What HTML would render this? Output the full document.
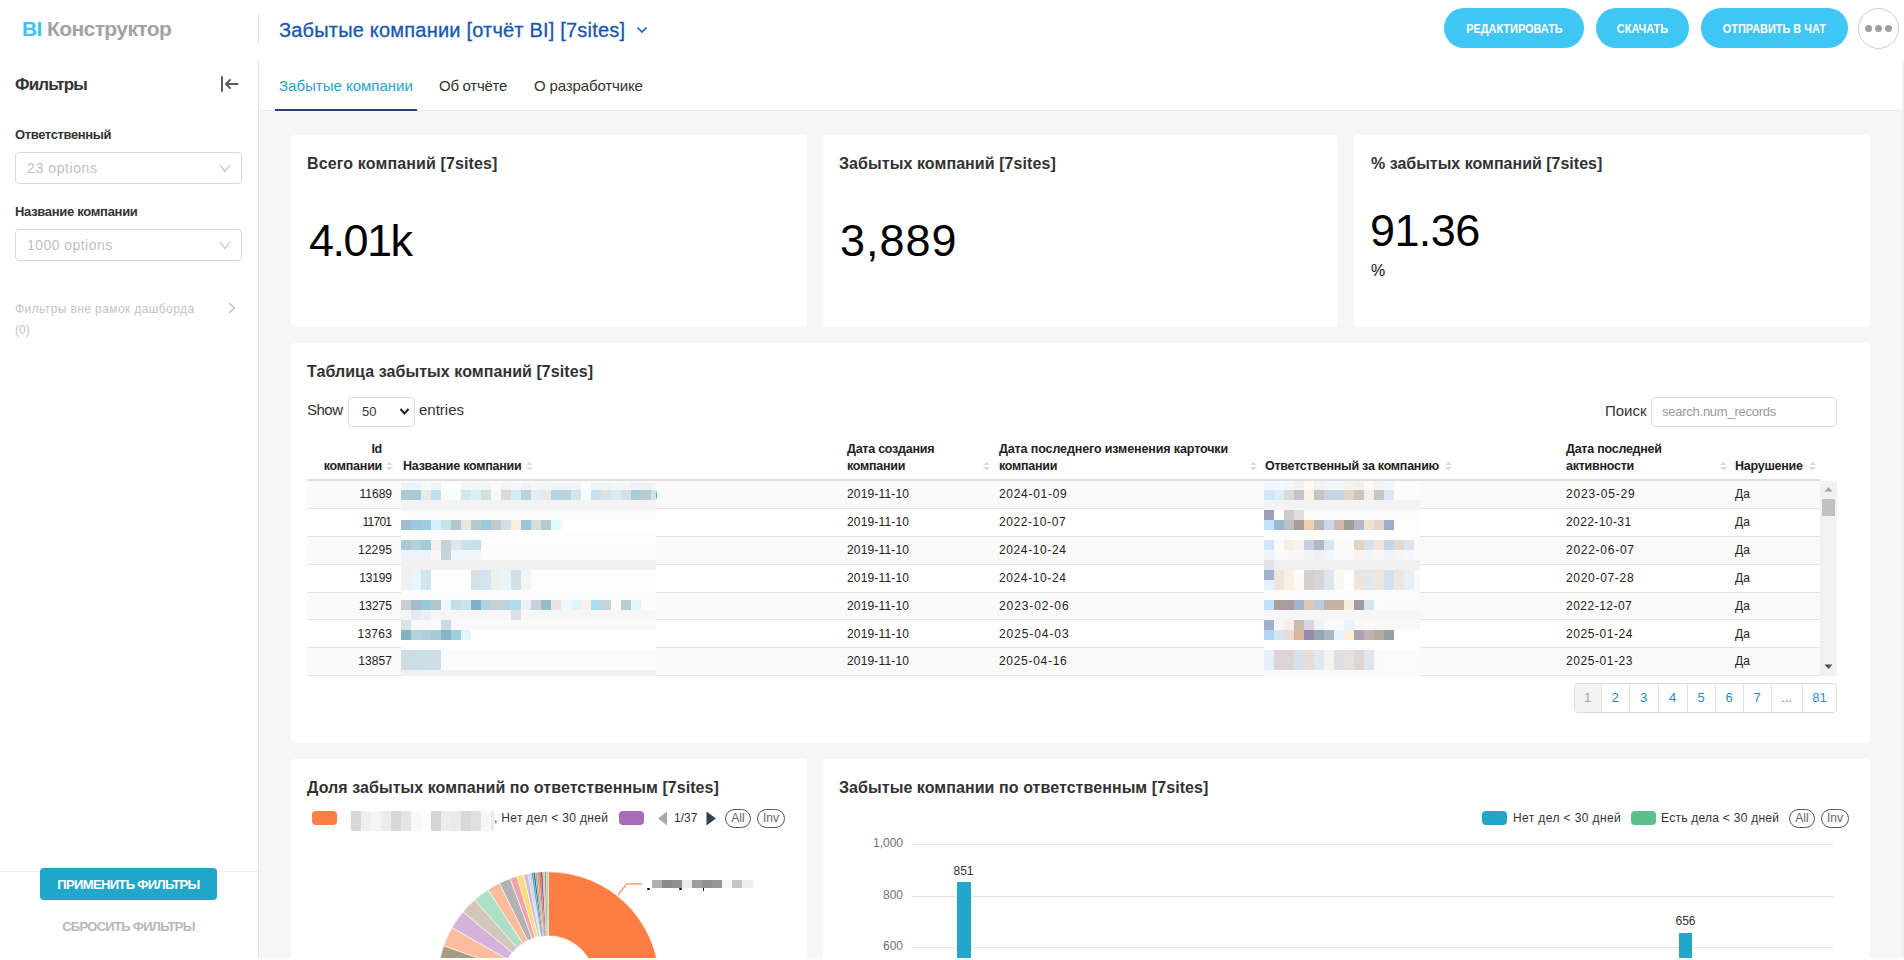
<!DOCTYPE html>
<html><head><meta charset="utf-8">
<style>
*{margin:0;padding:0;box-sizing:border-box}
html,body{width:1904px;height:960px;overflow:hidden;background:#fff;font-family:"Liberation Sans",sans-serif;color:#333}
.a{position:absolute;white-space:nowrap;line-height:1}
.box{position:absolute}
#content{position:absolute;left:259px;top:111px;width:1643px;height:847px;background:#f6f6f6}
.card{position:absolute;background:#fff;border-radius:4px}
.pill{position:absolute;top:8px;height:40px;border-radius:20px;background:#40c6f2;color:#fff;font-weight:bold;font-size:13px;line-height:40px;text-align:center}
.pill span{display:inline-block;transform:scaleX(0.84);position:relative;top:1px}
.kt{font-size:16px;font-weight:bold;color:#323232}
.kv{font-size:45px;color:#000}
.th{font-size:12.5px;font-weight:bold;color:#222;letter-spacing:-0.25px}
.td{font-size:12px;color:#222}
.pg{font-size:13px}
.lg{font-size:12px;color:#333}
.ax{font-size:12px;color:#6e7079}
</style></head><body>

<!-- HEADER -->
<div class="a" style="left:22px;top:18px;font-size:21px;font-weight:bold;letter-spacing:-0.6px"><span style="color:#3ec3f2">BI</span> <span style="color:#9ea3aa">Конструктор</span></div>
<div class="box" style="left:258px;top:14px;width:1px;height:30px;background:#e0e0e0"></div>
<div class="a" style="left:279px;top:20px;font-size:20px;color:#1757ae;letter-spacing:0.2px;-webkit-text-stroke:0.3px #1757ae">Забытые компании [отчёт BI] [7sites]</div>
<svg class="box" style="left:636px;top:25px" width="12" height="10" viewBox="0 0 12 10"><path d="M1.5 2.5 L6 7 L10.5 2.5" fill="none" stroke="#1e60b5" stroke-width="1.6"/></svg>

<div class="pill" style="left:1444px;width:140px"><span>РЕДАКТИРОВАТЬ</span></div>
<div class="pill" style="left:1596px;width:93px"><span>СКАЧАТЬ</span></div>
<div class="pill" style="left:1701px;width:147px"><span>ОТПРАВИТЬ В ЧАТ</span></div>
<div class="box" style="left:1858px;top:8px;width:41px;height:41px;border-radius:50%;border:1px solid #ccc"></div>
<div class="box" style="left:1865px;top:25px;width:7px;height:7px;border-radius:50%;background:#9a9fa6"></div>
<div class="box" style="left:1875px;top:25px;width:7px;height:7px;border-radius:50%;background:#9a9fa6"></div>
<div class="box" style="left:1885px;top:25px;width:7px;height:7px;border-radius:50%;background:#9a9fa6"></div>

<!-- SIDEBAR -->
<div class="box" style="left:258px;top:61px;width:1px;height:897px;background:#e3e3e3"></div>
<div class="a" style="left:15px;top:76px;font-size:17px;font-weight:bold;letter-spacing:-0.85px">Фильтры</div>
<svg class="box" style="left:218px;top:74px" width="22" height="20" viewBox="0 0 22 20"><path d="M4 3 V17 M8 10 H19.5 M12 6 L8 10 L12 14" fill="none" stroke="#5a5a5a" stroke-width="2" stroke-linecap="round" stroke-linejoin="round"/></svg>

<div class="a" style="left:15px;top:128px;font-size:13px;font-weight:bold;letter-spacing:-0.38px">Ответственный</div>
<div class="box" style="left:15px;top:152px;width:227px;height:32px;border:1px solid #d9d9d9;border-radius:4px"></div>
<div class="a" style="left:27px;top:161px;font-size:14px;color:#bfbfbf;letter-spacing:0.6px">23 options</div>
<svg class="box" style="left:219px;top:163px" width="12" height="10" viewBox="0 0 12 10"><path d="M1.2 2 L6 8.6 L10.8 2" fill="none" stroke="#bdbdbd" stroke-width="1.1"/></svg>

<div class="a" style="left:15px;top:205px;font-size:13px;font-weight:bold;letter-spacing:-0.3px">Название компании</div>
<div class="box" style="left:15px;top:229px;width:227px;height:32px;border:1px solid #d9d9d9;border-radius:4px"></div>
<div class="a" style="left:27px;top:238px;font-size:14px;color:#bfbfbf;letter-spacing:0.45px">1000 options</div>
<svg class="box" style="left:219px;top:240px" width="12" height="10" viewBox="0 0 12 10"><path d="M1.2 2 L6 8.6 L10.8 2" fill="none" stroke="#bdbdbd" stroke-width="1.1"/></svg>

<div class="a" style="left:15px;top:303px;font-size:12px;color:#c4c4c4;letter-spacing:0.4px">Фильтры вне рамок дашборда</div>
<div class="a" style="left:15px;top:324px;font-size:12px;color:#c4c4c4">(0)</div>
<svg class="box" style="left:227px;top:302px" width="10" height="12" viewBox="0 0 10 12"><path d="M2 1 L7.5 6 L2 11" fill="none" stroke="#bbb" stroke-width="1.2"/></svg>

<div class="box" style="left:0;top:871px;width:258px;height:1px;background:#ececec"></div>
<div class="box" style="left:40px;top:868px;width:177px;height:32px;border-radius:4px;background:#20a7cb"></div>
<div class="a" style="left:40px;top:878px;width:177px;text-align:center;font-size:13px;font-weight:bold;color:#fff;letter-spacing:-0.65px">ПРИМЕНИТЬ ФИЛЬТРЫ</div>
<div class="a" style="left:40px;top:920px;width:177px;text-align:center;font-size:13px;font-weight:bold;color:#b8b8b8;letter-spacing:-0.7px">СБРОСИТЬ ФИЛЬТРЫ</div>

<!-- TABS -->
<div class="box" style="left:1902px;top:61px;width:2px;height:899px;background:#efefef"></div>
<div class="box" style="left:259px;top:110px;width:1643px;height:1px;background:#e8e8e8"></div>
<div class="a" style="left:279px;top:78px;font-size:15px;color:#2aa3cc">Забытые компании</div>
<div class="a" style="left:439px;top:78px;font-size:15px;color:#333;letter-spacing:-0.28px">Об отчёте</div>
<div class="a" style="left:534px;top:78px;font-size:15px;color:#333;letter-spacing:-0.14px">О разработчике</div>
<div class="box" style="left:275px;top:109px;width:142px;height:2px;background:#2f3f7a"></div>

<div id="content">
</div>


<!-- KPI -->
<div class="card" style="left:291px;top:135px;width:516px;height:192px"></div>
<div class="card" style="left:823px;top:135px;width:515px;height:192px"></div>
<div class="card" style="left:1354px;top:135px;width:516px;height:192px"></div>
<div class="a kt" style="left:307px;top:156px;letter-spacing:0.13px">Всего компаний [7sites]</div>
<div class="a kt" style="left:839px;top:156px;letter-spacing:0.08px">Забытых компаний [7sites]</div>
<div class="a kt" style="left:1371px;top:156px">% забытых компаний [7sites]</div>
<div class="a kv" style="left:309px;top:218px;letter-spacing:-1.5px">4.01k</div>
<div class="a kv" style="left:840px;top:218px;letter-spacing:1px">3,889</div>
<div class="a kv" style="left:1370px;top:208px;letter-spacing:-0.6px">91.36</div>
<div class="a" style="left:1371px;top:263px;font-size:16px;color:#111">%</div>

<!-- TABLE CARD -->
<div class="card" style="left:291px;top:343px;width:1579px;height:400px"></div>
<div class="a kt" style="left:307px;top:364px;letter-spacing:0.07px">Таблица забытых компаний [7sites]</div>
<div class="a" style="left:307px;top:402px;font-size:15px;color:#333;letter-spacing:-0.5px">Show</div>
<div class="box" style="left:348px;top:397px;width:67px;height:30px;border:1px solid #ddd;border-radius:4px"></div>
<div class="a" style="left:362px;top:405px;font-size:13px;color:#333">50</div>
<svg class="box" style="left:399px;top:407px" width="11" height="9" viewBox="0 0 11 9"><path d="M1.5 2 L5.5 6.5 L9.5 2" fill="none" stroke="#222" stroke-width="2"/></svg>
<div class="a" style="left:419px;top:402px;font-size:15px;color:#333">entries</div>
<div class="a" style="left:1605px;top:403px;font-size:15px;color:#333">Поиск</div>
<div class="box" style="left:1651px;top:397px;width:186px;height:30px;border:1px solid #ddd;border-radius:4px"></div>
<div class="a" style="left:1662px;top:405px;font-size:13px;color:#999;letter-spacing:-0.25px">search.num_records</div>

<!-- TABLE BODY -->
<div class="a th" style="left:300px;width:82px;text-align:right;top:443px">Id</div>
<div class="a th" style="left:300px;width:82px;text-align:right;top:460px">компании</div>
<svg class="box" style="left:386px;top:461px" width="7" height="10" viewBox="0 0 7 10"><path d="M0 4 L3.5 0.5 L7 4Z M0 6 L3.5 9.5 L7 6Z" fill="#dcdcdc"/></svg>
<div class="a th" style="left:403px;top:460px">Название компании</div>
<svg class="box" style="left:526px;top:461px" width="7" height="10" viewBox="0 0 7 10"><path d="M0 4 L3.5 0.5 L7 4Z M0 6 L3.5 9.5 L7 6Z" fill="#dcdcdc"/></svg>
<div class="a th" style="left:847px;top:443px">Дата создания</div>
<div class="a th" style="left:847px;top:460px">компании</div>
<svg class="box" style="left:983px;top:461px" width="7" height="10" viewBox="0 0 7 10"><path d="M0 4 L3.5 0.5 L7 4Z M0 6 L3.5 9.5 L7 6Z" fill="#dcdcdc"/></svg>
<div class="a th" style="left:999px;top:443px;letter-spacing:-0.12px">Дата последнего изменения карточки</div>
<div class="a th" style="left:999px;top:460px">компании</div>
<svg class="box" style="left:1250px;top:461px" width="7" height="10" viewBox="0 0 7 10"><path d="M0 4 L3.5 0.5 L7 4Z M0 6 L3.5 9.5 L7 6Z" fill="#dcdcdc"/></svg>
<div class="a th" style="left:1265px;top:460px">Ответственный за компанию</div>
<svg class="box" style="left:1445px;top:461px" width="7" height="10" viewBox="0 0 7 10"><path d="M0 4 L3.5 0.5 L7 4Z M0 6 L3.5 9.5 L7 6Z" fill="#dcdcdc"/></svg>
<div class="a th" style="left:1566px;top:443px">Дата последней</div>
<div class="a th" style="left:1566px;top:460px">активности</div>
<svg class="box" style="left:1720px;top:461px" width="7" height="10" viewBox="0 0 7 10"><path d="M0 4 L3.5 0.5 L7 4Z M0 6 L3.5 9.5 L7 6Z" fill="#dcdcdc"/></svg>
<div class="a th" style="left:1735px;top:460px">Нарушение</div>
<svg class="box" style="left:1809px;top:461px" width="7" height="10" viewBox="0 0 7 10"><path d="M0 4 L3.5 0.5 L7 4Z M0 6 L3.5 9.5 L7 6Z" fill="#dcdcdc"/></svg>
<div class="box" style="left:307px;top:479px;width:1513px;height:2px;background:#dedede"></div>
<div class="box" style="left:307px;top:481px;width:1513px;height:28px;background:#fafafa;border-bottom:1px solid #e2e2e2"></div>
<div class="a td" style="left:359.5px;top:488px;letter-spacing:0.0px">11689</div>
<div class="a td" style="left:847px;top:488px;letter-spacing:0.16px">2019-11-10</div>
<div class="a td" style="left:999px;top:488px;letter-spacing:0.7px">2024-01-09</div>
<div class="a td" style="left:1566px;top:488px;letter-spacing:0.81px">2023-05-29</div>
<div class="a td" style="left:1735px;top:488px">Да</div>
<div class="box" style="left:307px;top:509px;width:1513px;height:28px;background:#fff;border-bottom:1px solid #e2e2e2"></div>
<div class="a td" style="left:362.5px;top:516px;letter-spacing:-0.75px">11701</div>
<div class="a td" style="left:847px;top:516px;letter-spacing:0.16px">2019-11-10</div>
<div class="a td" style="left:999px;top:516px;letter-spacing:0.58px">2022-10-07</div>
<div class="a td" style="left:1566px;top:516px;letter-spacing:0.41px">2022-10-31</div>
<div class="a td" style="left:1735px;top:516px">Да</div>
<div class="box" style="left:307px;top:537px;width:1513px;height:28px;background:#fafafa;border-bottom:1px solid #e2e2e2"></div>
<div class="a td" style="left:358.0px;top:544px;letter-spacing:0.12px">12295</div>
<div class="a td" style="left:847px;top:544px;letter-spacing:0.16px">2019-11-10</div>
<div class="a td" style="left:999px;top:544px;letter-spacing:0.61px">2024-10-24</div>
<div class="a td" style="left:1566px;top:544px;letter-spacing:0.73px">2022-06-07</div>
<div class="a td" style="left:1735px;top:544px">Да</div>
<div class="box" style="left:307px;top:565px;width:1513px;height:28px;background:#fff;border-bottom:1px solid #e2e2e2"></div>
<div class="a td" style="left:359.3px;top:572px;letter-spacing:-0.2px">13199</div>
<div class="a td" style="left:847px;top:572px;letter-spacing:0.16px">2019-11-10</div>
<div class="a td" style="left:999px;top:572px;letter-spacing:0.61px">2024-10-24</div>
<div class="a td" style="left:1566px;top:572px;letter-spacing:0.69px">2020-07-28</div>
<div class="a td" style="left:1735px;top:572px">Да</div>
<div class="box" style="left:307px;top:593px;width:1513px;height:27px;background:#fafafa;border-bottom:1px solid #e2e2e2"></div>
<div class="a td" style="left:358.7px;top:600px;letter-spacing:-0.05px">13275</div>
<div class="a td" style="left:847px;top:600px;letter-spacing:0.16px">2019-11-10</div>
<div class="a td" style="left:999px;top:600px;letter-spacing:0.91px">2023-02-06</div>
<div class="a td" style="left:1566px;top:600px;letter-spacing:0.49px">2022-12-07</div>
<div class="a td" style="left:1735px;top:600px">Да</div>
<div class="box" style="left:307px;top:620px;width:1513px;height:28px;background:#fff;border-bottom:1px solid #e2e2e2"></div>
<div class="a td" style="left:357.5px;top:628px;letter-spacing:0.25px">13763</div>
<div class="a td" style="left:847px;top:628px;letter-spacing:0.16px">2019-11-10</div>
<div class="a td" style="left:999px;top:628px;letter-spacing:0.91px">2025-04-03</div>
<div class="a td" style="left:1566px;top:628px;letter-spacing:0.57px">2025-01-24</div>
<div class="a td" style="left:1735px;top:628px">Да</div>
<div class="box" style="left:307px;top:648px;width:1513px;height:28px;background:#fafafa;border-bottom:1px solid #e2e2e2"></div>
<div class="a td" style="left:358.2px;top:655px;letter-spacing:0.08px">13857</div>
<div class="a td" style="left:847px;top:655px;letter-spacing:0.16px">2019-11-10</div>
<div class="a td" style="left:999px;top:655px;letter-spacing:0.7px">2025-04-16</div>
<div class="a td" style="left:1566px;top:655px;letter-spacing:0.57px">2025-01-23</div>
<div class="a td" style="left:1735px;top:655px">Да</div>
<div class="a td" style="left:653.5px;top:488px;color:#2a86c8">)</div>
<svg class="box" style="left:401px;top:483px" width="255" height="193" shape-rendering="crispEdges"><rect x="0" y="0" width="20" height="7" fill="#ecf2f5"/><rect x="20" y="0" width="10" height="7" fill="#f8f8f6"/><rect x="30" y="0" width="10" height="7" fill="#eef5f8"/><rect x="40" y="0" width="20" height="7" fill="#fcfcfc"/><rect x="60" y="0" width="10" height="7" fill="#f1f6f9"/><rect x="70" y="0" width="10" height="7" fill="#f2f7f8"/><rect x="80" y="0" width="10" height="7" fill="#f4f5f3"/><rect x="90" y="0" width="10" height="7" fill="#fafaf8"/><rect x="100" y="0" width="10" height="7" fill="#f3f4f3"/><rect x="110" y="0" width="10" height="7" fill="#f4f8fa"/><rect x="120" y="0" width="10" height="7" fill="#eef2f5"/><rect x="130" y="0" width="10" height="7" fill="#f5f8fa"/><rect x="140" y="0" width="10" height="7" fill="#f3f6f6"/><rect x="150" y="0" width="20" height="7" fill="#eef3f5"/><rect x="170" y="0" width="10" height="7" fill="#f0f5f7"/><rect x="180" y="0" width="10" height="7" fill="#fbfcfc"/><rect x="190" y="0" width="10" height="7" fill="#eef4f8"/><rect x="200" y="0" width="10" height="7" fill="#f2f4f3"/><rect x="210" y="0" width="10" height="7" fill="#f3f7fa"/><rect x="220" y="0" width="10" height="7" fill="#f4f6f7"/><rect x="230" y="0" width="20" height="7" fill="#ecf1f3"/><rect x="250" y="0" width="5" height="7" fill="#f2f5f6"/><rect x="0" y="7" width="10" height="10" fill="#afc9d1"/><rect x="10" y="7" width="10" height="10" fill="#a7cad8"/><rect x="20" y="7" width="10" height="10" fill="#e8eae6"/><rect x="30" y="7" width="10" height="10" fill="#bfe0ef"/><rect x="40" y="7" width="10" height="10" fill="#fbfcf9"/><rect x="50" y="7" width="10" height="10" fill="#f8fdfe"/><rect x="60" y="7" width="10" height="10" fill="#d3e6ef"/><rect x="70" y="7" width="10" height="10" fill="#d9eef5"/><rect x="80" y="7" width="10" height="10" fill="#d5dfde"/><rect x="90" y="7" width="10" height="10" fill="#f7f8f0"/><rect x="100" y="7" width="10" height="10" fill="#d5dcdd"/><rect x="110" y="7" width="10" height="10" fill="#d5ecf8"/><rect x="120" y="7" width="10" height="10" fill="#b9d3dd"/><rect x="130" y="7" width="10" height="10" fill="#e2eef5"/><rect x="140" y="7" width="10" height="10" fill="#e8e9e8"/><rect x="150" y="7" width="20" height="10" fill="#b7d4de"/><rect x="170" y="7" width="10" height="10" fill="#d0e6ea"/><rect x="180" y="7" width="10" height="10" fill="#fafcfc"/><rect x="190" y="7" width="10" height="10" fill="#c5e1ee"/><rect x="200" y="7" width="10" height="10" fill="#dbe2e4"/><rect x="210" y="7" width="10" height="10" fill="#d4edf4"/><rect x="220" y="7" width="10" height="10" fill="#d6e2e1"/><rect x="230" y="7" width="10" height="10" fill="#a8cdd6"/><rect x="240" y="7" width="10" height="10" fill="#b6cdd6"/><rect x="250" y="7" width="5" height="10" fill="#d7e3e3"/><rect x="0" y="17" width="255" height="10" fill="#f3f3f3"/><rect x="0" y="27" width="255" height="10" fill="#fcfcfc"/><rect x="0" y="37" width="10" height="10" fill="#9dbdd0"/><rect x="10" y="37" width="10" height="10" fill="#a0c6dd"/><rect x="20" y="37" width="10" height="10" fill="#9ccde2"/><rect x="30" y="37" width="10" height="10" fill="#d1f1fc"/><rect x="40" y="37" width="10" height="10" fill="#c5e5e3"/><rect x="50" y="37" width="10" height="10" fill="#b3c7d0"/><rect x="60" y="37" width="10" height="10" fill="#e6e9e2"/><rect x="70" y="37" width="10" height="10" fill="#b7c9cc"/><rect x="80" y="37" width="10" height="10" fill="#9cc7da"/><rect x="90" y="37" width="10" height="10" fill="#c1cacd"/><rect x="100" y="37" width="10" height="10" fill="#d4dfe2"/><rect x="110" y="37" width="10" height="10" fill="#fbede1"/><rect x="120" y="37" width="10" height="10" fill="#9dc3d9"/><rect x="130" y="37" width="10" height="10" fill="#d5dedb"/><rect x="140" y="37" width="10" height="10" fill="#b8c9c9"/><rect x="150" y="37" width="10" height="10" fill="#defcfe"/><rect x="160" y="37" width="95" height="10" fill="#ffffff"/><rect x="0" y="47" width="255" height="10" fill="#fdfdfd"/><rect x="0" y="57" width="10" height="10" fill="#a9cbd7"/><rect x="10" y="57" width="10" height="10" fill="#b4d0d8"/><rect x="20" y="57" width="10" height="10" fill="#a2cbd8"/><rect x="30" y="57" width="10" height="10" fill="#f6efe9"/><rect x="40" y="57" width="10" height="10" fill="#c3d3da"/><rect x="50" y="57" width="10" height="10" fill="#dce7ec"/><rect x="60" y="57" width="10" height="10" fill="#c9e2ea"/><rect x="70" y="57" width="10" height="10" fill="#c3e1e4"/><rect x="80" y="57" width="175" height="10" fill="#fcfcfc"/><rect x="0" y="67" width="30" height="10" fill="#ecf3f6"/><rect x="30" y="67" width="10" height="10" fill="#fbf9f7"/><rect x="40" y="67" width="10" height="10" fill="#c3d3da"/><rect x="50" y="67" width="30" height="10" fill="#f1f6f7"/><rect x="80" y="67" width="175" height="10" fill="#fcfcfc"/><rect x="0" y="77" width="255" height="10" fill="#f0f0f0"/><rect x="0" y="87" width="10" height="20" fill="#f0f0f0"/><rect x="10" y="87" width="10" height="20" fill="#e6f6fb"/><rect x="20" y="87" width="10" height="20" fill="#d0e6ee"/><rect x="30" y="87" width="40" height="20" fill="#fdfdfd"/><rect x="70" y="87" width="10" height="20" fill="#d3e2e7"/><rect x="80" y="87" width="10" height="20" fill="#d2e4ef"/><rect x="90" y="87" width="10" height="20" fill="#ecf0ee"/><rect x="100" y="87" width="10" height="20" fill="#e7f4f9"/><rect x="110" y="87" width="10" height="20" fill="#d1e1e7"/><rect x="120" y="87" width="10" height="20" fill="#f6f4f0"/><rect x="130" y="87" width="125" height="20" fill="#fdfdfd"/><rect x="0" y="107" width="255" height="10" fill="#fcfcfc"/><rect x="0" y="117" width="10" height="10" fill="#c8cfd0"/><rect x="10" y="117" width="10" height="10" fill="#a5bdc8"/><rect x="20" y="117" width="10" height="10" fill="#99cadb"/><rect x="30" y="117" width="10" height="10" fill="#b2c6cb"/><rect x="40" y="117" width="10" height="10" fill="#eef7f9"/><rect x="50" y="117" width="10" height="10" fill="#c5dde6"/><rect x="60" y="117" width="10" height="10" fill="#c9e3ee"/><rect x="70" y="117" width="10" height="10" fill="#80b4c4"/><rect x="80" y="117" width="10" height="10" fill="#acd4e2"/><rect x="90" y="117" width="10" height="10" fill="#c8d0d3"/><rect x="100" y="117" width="10" height="10" fill="#bad5df"/><rect x="110" y="117" width="10" height="10" fill="#b1dded"/><rect x="120" y="117" width="10" height="10" fill="#e8f1f4"/><rect x="130" y="117" width="10" height="10" fill="#c8d0da"/><rect x="140" y="117" width="10" height="10" fill="#94bcc8"/><rect x="150" y="117" width="10" height="10" fill="#ebe5e3"/><rect x="160" y="117" width="10" height="10" fill="#eff8fb"/><rect x="170" y="117" width="10" height="10" fill="#dff4fa"/><rect x="180" y="117" width="10" height="10" fill="#f8f3ea"/><rect x="190" y="117" width="10" height="10" fill="#a8dcee"/><rect x="200" y="117" width="10" height="10" fill="#c7d2d6"/><rect x="210" y="117" width="10" height="10" fill="#fcfbf7"/><rect x="220" y="117" width="10" height="10" fill="#b8cdd3"/><rect x="230" y="117" width="10" height="10" fill="#dff7fb"/><rect x="240" y="117" width="15" height="10" fill="#fcfcfc"/><rect x="0" y="127" width="10" height="10" fill="#f6f6f6"/><rect x="10" y="127" width="10" height="10" fill="#e2e9f1"/><rect x="20" y="127" width="10" height="10" fill="#ebeff3"/><rect x="30" y="127" width="80" height="10" fill="#f6f6f6"/><rect x="110" y="127" width="10" height="10" fill="#d9e2e9"/><rect x="120" y="127" width="135" height="10" fill="#f6f6f6"/><rect x="0" y="137" width="10" height="10" fill="#dae5e8"/><rect x="10" y="137" width="30" height="10" fill="#f9f9f9"/><rect x="40" y="137" width="10" height="10" fill="#c5dce2"/><rect x="50" y="137" width="205" height="10" fill="#f9f9f9"/><rect x="0" y="147" width="10" height="10" fill="#85b2c3"/><rect x="10" y="147" width="10" height="10" fill="#b5d3d6"/><rect x="20" y="147" width="10" height="10" fill="#acd0dd"/><rect x="30" y="147" width="10" height="10" fill="#a4cdd2"/><rect x="40" y="147" width="10" height="10" fill="#87b6c6"/><rect x="50" y="147" width="10" height="10" fill="#99cfe1"/><rect x="60" y="147" width="10" height="10" fill="#e4f3f9"/><rect x="70" y="147" width="185" height="10" fill="#ffffff"/><rect x="0" y="157" width="255" height="10" fill="#fefefe"/><rect x="0" y="167" width="10" height="20" fill="#cddde4"/><rect x="10" y="167" width="10" height="20" fill="#c5e0e7"/><rect x="20" y="167" width="10" height="20" fill="#cbdfe6"/><rect x="30" y="167" width="10" height="20" fill="#cfdee6"/><rect x="40" y="167" width="215" height="20" fill="#fbfbfb"/><rect x="0" y="187" width="255" height="6" fill="#f0f0f0"/></svg>
<svg class="box" style="left:1264px;top:481px" width="156" height="195" shape-rendering="crispEdges"><rect x="0" y="0" width="10" height="9" fill="#f3f7fc"/><rect x="10" y="0" width="10" height="9" fill="#f2f9fd"/><rect x="20" y="0" width="10" height="9" fill="#f5f5f5"/><rect x="30" y="0" width="10" height="9" fill="#f1f1f3"/><rect x="40" y="0" width="10" height="9" fill="#fcfbf6"/><rect x="50" y="0" width="10" height="9" fill="#f2f2f2"/><rect x="60" y="0" width="10" height="9" fill="#f3f4f6"/><rect x="70" y="0" width="10" height="9" fill="#f1f4f9"/><rect x="80" y="0" width="10" height="9" fill="#f5f3f0"/><rect x="90" y="0" width="10" height="9" fill="#f2f1ef"/><rect x="100" y="0" width="10" height="9" fill="#fbfaf7"/><rect x="110" y="0" width="10" height="9" fill="#f3f3f3"/><rect x="120" y="0" width="10" height="9" fill="#f3f7fb"/><rect x="130" y="0" width="26" height="9" fill="#fcfcfc"/><rect x="0" y="9" width="10" height="10" fill="#cfe6fb"/><rect x="10" y="9" width="10" height="10" fill="#d9eef8"/><rect x="20" y="9" width="10" height="10" fill="#d8dbd8"/><rect x="30" y="9" width="10" height="10" fill="#c5c2c8"/><rect x="40" y="9" width="10" height="10" fill="#fcf1e1"/><rect x="50" y="9" width="10" height="10" fill="#c4c4c3"/><rect x="60" y="9" width="10" height="10" fill="#cbd3dc"/><rect x="70" y="9" width="10" height="10" fill="#c6d4ea"/><rect x="80" y="9" width="10" height="10" fill="#e1d5ca"/><rect x="90" y="9" width="10" height="10" fill="#ccc4bd"/><rect x="100" y="9" width="10" height="10" fill="#f3ede5"/><rect x="110" y="9" width="10" height="10" fill="#c6c6c9"/><rect x="120" y="9" width="10" height="10" fill="#dbe9f6"/><rect x="130" y="9" width="26" height="10" fill="#fcfcfc"/><rect x="0" y="19" width="156" height="10" fill="#f3f3f3"/><rect x="0" y="29" width="10" height="10" fill="#9aa0b7"/><rect x="10" y="29" width="10" height="10" fill="#fdfdfd"/><rect x="20" y="29" width="10" height="10" fill="#cccccc"/><rect x="30" y="29" width="10" height="10" fill="#dedede"/><rect x="40" y="29" width="116" height="10" fill="#fcfcfc"/><rect x="0" y="39" width="10" height="10" fill="#c3e2fd"/><rect x="10" y="39" width="10" height="10" fill="#96b8d0"/><rect x="20" y="39" width="10" height="10" fill="#bdbfc1"/><rect x="30" y="39" width="10" height="10" fill="#aa9b9a"/><rect x="40" y="39" width="10" height="10" fill="#ecd0ac"/><rect x="50" y="39" width="10" height="10" fill="#b5b7b2"/><rect x="60" y="39" width="10" height="10" fill="#c6d9ec"/><rect x="70" y="39" width="10" height="10" fill="#cdb9b0"/><rect x="80" y="39" width="10" height="10" fill="#9e9e97"/><rect x="90" y="39" width="10" height="10" fill="#b4b6cf"/><rect x="100" y="39" width="10" height="10" fill="#ede3d4"/><rect x="110" y="39" width="10" height="10" fill="#e3d5c8"/><rect x="120" y="39" width="10" height="10" fill="#9eadca"/><rect x="130" y="39" width="26" height="10" fill="#fdfdfd"/><rect x="0" y="49" width="156" height="10" fill="#fdfdfd"/><rect x="0" y="59" width="10" height="10" fill="#d0e7fb"/><rect x="10" y="59" width="10" height="10" fill="#fbfbfb"/><rect x="20" y="59" width="10" height="10" fill="#f6ede3"/><rect x="30" y="59" width="10" height="10" fill="#f7f2ed"/><rect x="40" y="59" width="10" height="10" fill="#c3d1e3"/><rect x="50" y="59" width="10" height="10" fill="#b2b7c4"/><rect x="60" y="59" width="10" height="10" fill="#d7e6f3"/><rect x="70" y="59" width="10" height="10" fill="#f7faf5"/><rect x="80" y="59" width="10" height="10" fill="#fafafa"/><rect x="90" y="59" width="10" height="10" fill="#e2d4c4"/><rect x="100" y="59" width="10" height="10" fill="#d6e1ed"/><rect x="110" y="59" width="10" height="10" fill="#f1e5da"/><rect x="120" y="59" width="10" height="10" fill="#c3d7e9"/><rect x="130" y="59" width="10" height="10" fill="#e3d8cc"/><rect x="140" y="59" width="10" height="10" fill="#dce5ef"/><rect x="150" y="59" width="6" height="10" fill="#f7fafb"/><rect x="0" y="69" width="10" height="10" fill="#f1f5fb"/><rect x="10" y="69" width="10" height="10" fill="#fafafa"/><rect x="20" y="69" width="20" height="10" fill="#faf9f7"/><rect x="40" y="69" width="10" height="10" fill="#f0f4f7"/><rect x="50" y="69" width="10" height="10" fill="#eff0f2"/><rect x="60" y="69" width="10" height="10" fill="#f2f6fa"/><rect x="70" y="69" width="20" height="10" fill="#fafafa"/><rect x="90" y="69" width="10" height="10" fill="#f7f4ef"/><rect x="100" y="69" width="10" height="10" fill="#f3f6f9"/><rect x="110" y="69" width="10" height="10" fill="#f9f7f3"/><rect x="120" y="69" width="10" height="10" fill="#f0f4f8"/><rect x="130" y="69" width="10" height="10" fill="#f5f5f1"/><rect x="140" y="69" width="10" height="10" fill="#f5f7f9"/><rect x="150" y="69" width="6" height="10" fill="#fafafa"/><rect x="0" y="79" width="10" height="10" fill="#e3e3e5"/><rect x="10" y="79" width="146" height="10" fill="#f0f0f0"/><rect x="0" y="89" width="10" height="10" fill="#a0b1cb"/><rect x="10" y="89" width="10" height="10" fill="#eee5de"/><rect x="20" y="89" width="10" height="10" fill="#fcf0e3"/><rect x="30" y="89" width="10" height="10" fill="#fdfaf6"/><rect x="40" y="89" width="10" height="10" fill="#d7d0d1"/><rect x="50" y="89" width="10" height="10" fill="#d5d6d8"/><rect x="60" y="89" width="10" height="10" fill="#dde5ee"/><rect x="70" y="89" width="10" height="10" fill="#f8f9f2"/><rect x="80" y="89" width="10" height="10" fill="#fefefe"/><rect x="90" y="89" width="10" height="10" fill="#efe5db"/><rect x="100" y="89" width="10" height="10" fill="#e2e6ee"/><rect x="110" y="89" width="10" height="10" fill="#efe6df"/><rect x="120" y="89" width="10" height="10" fill="#d1e1f1"/><rect x="130" y="89" width="10" height="10" fill="#f1e6db"/><rect x="140" y="89" width="10" height="10" fill="#e6eef6"/><rect x="150" y="89" width="6" height="10" fill="#f6fafd"/><rect x="0" y="99" width="10" height="10" fill="#e3f0fd"/><rect x="10" y="99" width="10" height="10" fill="#eee5de"/><rect x="20" y="99" width="10" height="10" fill="#fcf0e3"/><rect x="30" y="99" width="10" height="10" fill="#fdfaf6"/><rect x="40" y="99" width="10" height="10" fill="#d7d0d1"/><rect x="50" y="99" width="10" height="10" fill="#d5d6d8"/><rect x="60" y="99" width="10" height="10" fill="#dde5ee"/><rect x="70" y="99" width="10" height="10" fill="#f8f9f2"/><rect x="80" y="99" width="10" height="10" fill="#fefefe"/><rect x="90" y="99" width="10" height="10" fill="#efe5db"/><rect x="100" y="99" width="10" height="10" fill="#e2e6ee"/><rect x="110" y="99" width="10" height="10" fill="#efe6df"/><rect x="120" y="99" width="10" height="10" fill="#d1e1f1"/><rect x="130" y="99" width="10" height="10" fill="#f1e6db"/><rect x="140" y="99" width="10" height="10" fill="#e6eef6"/><rect x="150" y="99" width="6" height="10" fill="#f6fafd"/><rect x="0" y="109" width="156" height="10" fill="#fbfbfb"/><rect x="0" y="119" width="10" height="10" fill="#c2e0fb"/><rect x="10" y="119" width="20" height="10" fill="#a89c9d"/><rect x="30" y="119" width="10" height="10" fill="#a0b5cf"/><rect x="40" y="119" width="10" height="10" fill="#e1c8b3"/><rect x="50" y="119" width="10" height="10" fill="#b9cde0"/><rect x="60" y="119" width="20" height="10" fill="#c3b3a7"/><rect x="80" y="119" width="10" height="10" fill="#f6efe0"/><rect x="90" y="119" width="10" height="10" fill="#a09ba2"/><rect x="100" y="119" width="10" height="10" fill="#d5e6f1"/><rect x="110" y="119" width="10" height="10" fill="#f9fcfc"/><rect x="120" y="119" width="36" height="10" fill="#fafafa"/><rect x="0" y="129" width="156" height="10" fill="#f6f6f6"/><rect x="0" y="139" width="10" height="10" fill="#a1b1cb"/><rect x="10" y="139" width="10" height="10" fill="#f8f5f2"/><rect x="20" y="139" width="10" height="10" fill="#f9efe8"/><rect x="30" y="139" width="10" height="10" fill="#c7bbb0"/><rect x="40" y="139" width="10" height="10" fill="#d9d5e1"/><rect x="50" y="139" width="10" height="10" fill="#eef3f8"/><rect x="60" y="139" width="20" height="10" fill="#f9f9f9"/><rect x="80" y="139" width="10" height="10" fill="#e7f3fa"/><rect x="90" y="139" width="66" height="10" fill="#f8f8f8"/><rect x="0" y="149" width="10" height="10" fill="#b3d5f5"/><rect x="10" y="149" width="10" height="10" fill="#d5e5f2"/><rect x="20" y="149" width="10" height="10" fill="#e6ddd6"/><rect x="30" y="149" width="10" height="10" fill="#d9b698"/><rect x="40" y="149" width="10" height="10" fill="#958baa"/><rect x="50" y="149" width="10" height="10" fill="#97a6b1"/><rect x="60" y="149" width="10" height="10" fill="#a7b8c4"/><rect x="70" y="149" width="10" height="10" fill="#e9f2fb"/><rect x="80" y="149" width="10" height="10" fill="#fcefd6"/><rect x="90" y="149" width="10" height="10" fill="#ada2af"/><rect x="100" y="149" width="10" height="10" fill="#c3b1b2"/><rect x="110" y="149" width="10" height="10" fill="#b2ad9f"/><rect x="120" y="149" width="10" height="10" fill="#93a1a5"/><rect x="130" y="149" width="26" height="10" fill="#ffffff"/><rect x="0" y="159" width="156" height="10" fill="#fefefe"/><rect x="0" y="169" width="10" height="20" fill="#e3effb"/><rect x="10" y="169" width="20" height="20" fill="#ddd5d5"/><rect x="30" y="169" width="10" height="20" fill="#d6dfea"/><rect x="40" y="169" width="10" height="20" fill="#e9dcd8"/><rect x="50" y="169" width="10" height="20" fill="#dee8f2"/><rect x="60" y="169" width="10" height="20" fill="#f4f2ee"/><rect x="70" y="169" width="10" height="20" fill="#dcdee2"/><rect x="80" y="169" width="10" height="20" fill="#e3e0dd"/><rect x="90" y="169" width="10" height="20" fill="#ded6d4"/><rect x="100" y="169" width="10" height="20" fill="#dee5ee"/><rect x="110" y="169" width="10" height="20" fill="#f8fafc"/><rect x="120" y="169" width="36" height="20" fill="#fbfbfb"/><rect x="0" y="189" width="156" height="6" fill="#fafafa"/></svg>
<div class="box" style="left:1820px;top:481px;width:17px;height:195px;background:#f1f1f1"></div>
<svg class="box" style="left:1824px;top:486px" width="9" height="6" viewBox="0 0 9 6"><path d="M0.5 5.5 L4.5 1 L8.5 5.5Z" fill="#a3a3a3"/></svg>
<div class="box" style="left:1822px;top:499px;width:13px;height:17px;background:#c1c1c1"></div>
<svg class="box" style="left:1824px;top:664px" width="9" height="6" viewBox="0 0 9 6"><path d="M0.5 0.5 L4.5 5 L8.5 0.5Z" fill="#505050"/></svg>
<div class="box" style="left:1574px;top:683px;width:263px;height:30px;border:1px solid #dcdcdc;border-radius:4px;overflow:hidden"></div>
<div class="box" style="left:1575px;top:684px;width:26px;height:28px;background:#f4f4f4;border-radius:3px 0 0 3px"></div>
<div class="a pg" style="left:1574px;width:27px;text-align:center;top:691px;color:#a3a3a3">1</div>
<div class="box" style="left:1601px;top:684px;width:1px;height:28px;background:#e0e0e0"></div>
<div class="a pg" style="left:1601px;width:28px;text-align:center;top:691px;color:#2a8cc0">2</div>
<div class="box" style="left:1629px;top:684px;width:1px;height:28px;background:#e0e0e0"></div>
<div class="a pg" style="left:1629px;width:29px;text-align:center;top:691px;color:#2a8cc0">3</div>
<div class="box" style="left:1658px;top:684px;width:1px;height:28px;background:#e0e0e0"></div>
<div class="a pg" style="left:1658px;width:29px;text-align:center;top:691px;color:#2a8cc0">4</div>
<div class="box" style="left:1687px;top:684px;width:1px;height:28px;background:#e0e0e0"></div>
<div class="a pg" style="left:1687px;width:28px;text-align:center;top:691px;color:#2a8cc0">5</div>
<div class="box" style="left:1715px;top:684px;width:1px;height:28px;background:#e0e0e0"></div>
<div class="a pg" style="left:1715px;width:28px;text-align:center;top:691px;color:#2a8cc0">6</div>
<div class="box" style="left:1743px;top:684px;width:1px;height:28px;background:#e0e0e0"></div>
<div class="a pg" style="left:1743px;width:28px;text-align:center;top:691px;color:#2a8cc0">7</div>
<div class="box" style="left:1771px;top:684px;width:1px;height:28px;background:#e0e0e0"></div>
<div class="a pg" style="left:1771px;width:31px;text-align:center;top:691px;color:#2a8cc0">...</div>
<div class="box" style="left:1802px;top:684px;width:1px;height:28px;background:#e0e0e0"></div>
<div class="a pg" style="left:1802px;width:35px;text-align:center;top:691px;color:#2a8cc0">81</div>
<!-- /TABLE BODY -->
<!-- CHARTS -->
<div class="card" style="left:291px;top:759px;width:516px;height:199px;border-radius:4px 4px 0 0"></div>
<div class="card" style="left:823px;top:759px;width:1047px;height:199px;border-radius:4px 4px 0 0"></div>
<div class="a kt" style="left:307px;top:780px;letter-spacing:0.06px">Доля забытых компаний по ответственным [7sites]</div>
<div class="a kt" style="left:839px;top:780px;letter-spacing:0.07px">Забытые компании по ответственным [7sites]</div>
<div class="box" style="left:312px;top:811px;width:25px;height:14px;border-radius:4px;background:#fd7e44"></div>
<svg class="box" style="left:351px;top:811px" width="143" height="20" shape-rendering="crispEdges"><rect x="0" y="0" width="10" height="20" fill="#d8d8d8"/><rect x="10" y="0" width="10" height="20" fill="#f0f0f0"/><rect x="20" y="0" width="10" height="20" fill="#f5f5f5"/><rect x="30" y="0" width="10" height="20" fill="#ececec"/><rect x="40" y="0" width="10" height="20" fill="#d7d7d7"/><rect x="50" y="0" width="10" height="20" fill="#e4e4e4"/><rect x="60" y="0" width="10" height="20" fill="#f8f8f8"/><rect x="70" y="0" width="10" height="20" fill="#fcfcfc"/><rect x="80" y="0" width="10" height="20" fill="#d4d4d4"/><rect x="90" y="0" width="10" height="20" fill="#ededed"/><rect x="100" y="0" width="10" height="20" fill="#eaeaea"/><rect x="110" y="0" width="10" height="20" fill="#d8d8d8"/><rect x="120" y="0" width="10" height="20" fill="#e0e0e0"/><rect x="130" y="0" width="10" height="20" fill="#f6f6f6"/><rect x="140" y="0" width="3" height="20" fill="#ebebeb"/></svg>
<div class="a lg" style="left:494px;top:812px;letter-spacing:0.32px">, Нет дел &lt; 30 дней</div>
<div class="box" style="left:619px;top:811px;width:25px;height:14px;border-radius:4px;background:#a66bb9"></div>
<svg class="box" style="left:657px;top:811px" width="11" height="15" viewBox="0 0 11 15"><path d="M1 7.5 L10 0.5 L10 14.5Z" fill="#aaa"/></svg>
<div class="a lg" style="left:674px;top:812px">1/37</div>
<svg class="box" style="left:706px;top:811px" width="11" height="15" viewBox="0 0 11 15"><path d="M0.5 0.5 L10 7.5 L0.5 14.5Z" fill="#2f4554"/></svg>
<div class="box" style="left:725px;top:809px;width:26px;height:19px;border:1px solid #555;border-radius:10px"></div><div class="a lg" style="left:725px;width:26px;text-align:center;top:812px;color:#666">All</div>
<div class="box" style="left:757px;top:809px;width:28px;height:19px;border:1px solid #555;border-radius:10px"></div><div class="a lg" style="left:757px;width:28px;text-align:center;top:812px;color:#666">Inv</div>
<svg class="box" style="left:291px;top:840px" width="516" height="118" viewBox="291 840 516 118"><path d="M548.30 871.80 A111 111 0 0 1 603.80 1078.93 L571.80 1023.50 A47 47 0 0 0 548.30 935.80Z" fill="#fd7e44" stroke="#fff" stroke-width="0.6"/><path d="M527.69 873.73 A111 111 0 0 1 529.55 873.40 L540.36 936.48 A47 47 0 0 0 539.57 936.62Z" fill="#8fd8dd" stroke="#fff" stroke-width="0.3"/><path d="M529.55 873.40 A111 111 0 0 1 531.41 873.09 L541.15 936.35 A47 47 0 0 0 540.36 936.48Z" fill="#d8c8b8" stroke="#fff" stroke-width="0.3"/><path d="M531.41 873.09 A111 111 0 0 1 533.27 872.82 L541.94 936.23 A47 47 0 0 0 541.15 936.35Z" fill="#2f9fd0" stroke="#fff" stroke-width="0.3"/><path d="M533.27 872.82 A111 111 0 0 1 535.14 872.58 L542.73 936.13 A47 47 0 0 0 541.94 936.23Z" fill="#3f4f8f" stroke="#fff" stroke-width="0.3"/><path d="M535.14 872.58 A111 111 0 0 1 537.01 872.38 L543.52 936.04 A47 47 0 0 0 542.73 936.13Z" fill="#5fbf8f" stroke="#fff" stroke-width="0.3"/><path d="M537.01 872.38 A111 111 0 0 1 538.89 872.20 L544.32 935.97 A47 47 0 0 0 543.52 936.04Z" fill="#fd7e44" stroke="#fff" stroke-width="0.3"/><path d="M538.89 872.20 A111 111 0 0 1 540.77 872.06 L545.11 935.91 A47 47 0 0 0 544.32 935.97Z" fill="#e05050" stroke="#fff" stroke-width="0.3"/><path d="M540.77 872.06 A111 111 0 0 1 542.65 871.94 L545.91 935.86 A47 47 0 0 0 545.11 935.91Z" fill="#3f4f8f" stroke="#fff" stroke-width="0.3"/><path d="M542.65 871.94 A111 111 0 0 1 544.53 871.86 L546.70 935.83 A47 47 0 0 0 545.91 935.86Z" fill="#fcbf40" stroke="#fff" stroke-width="0.3"/><path d="M544.53 871.86 A111 111 0 0 1 546.42 871.82 L547.50 935.81 A47 47 0 0 0 546.70 935.83Z" fill="#909090" stroke="#fff" stroke-width="0.3"/><path d="M546.42 871.82 A111 111 0 0 1 548.30 871.80 L548.30 935.80 A47 47 0 0 0 547.50 935.81Z" fill="#8fd8dd" stroke="#fff" stroke-width="0.3"/><path d="M523.52 874.60 A111 111 0 0 1 527.69 873.73 L539.57 936.62 A47 47 0 0 0 537.81 936.99Z" fill="#d5b3dc" stroke="#fff" stroke-width="0.6"/><path d="M516.77 876.37 A111 111 0 0 1 523.52 874.60 L537.81 936.99 A47 47 0 0 0 534.95 937.74Z" fill="#fcdb7a" stroke="#fff" stroke-width="0.6"/><path d="M509.97 878.63 A111 111 0 0 1 516.77 876.37 L534.95 937.74 A47 47 0 0 0 532.07 938.69Z" fill="#f0a3a6" stroke="#fff" stroke-width="0.6"/><path d="M499.29 883.20 A111 111 0 0 1 509.97 878.63 L532.07 938.69 A47 47 0 0 0 527.55 940.63Z" fill="#b2b2b2" stroke="#fff" stroke-width="0.6"/><path d="M487.85 889.71 A111 111 0 0 1 499.29 883.20 L527.55 940.63 A47 47 0 0 0 522.70 943.38Z" fill="#fdbd9c" stroke="#fff" stroke-width="0.6"/><path d="M474.46 899.92 A111 111 0 0 1 487.85 889.71 L522.70 943.38 A47 47 0 0 0 517.03 947.71Z" fill="#afe0c3" stroke="#fff" stroke-width="0.6"/><path d="M462.90 911.90 A111 111 0 0 1 474.46 899.92 L517.03 947.71 A47 47 0 0 0 512.14 952.78Z" fill="#d3c7bb" stroke="#fff" stroke-width="0.6"/><path d="M451.98 927.64 A111 111 0 0 1 462.90 911.90 L512.14 952.78 A47 47 0 0 0 507.52 959.44Z" fill="#d4b2da" stroke="#fff" stroke-width="0.6"/><path d="M443.60 945.93 A111 111 0 0 1 451.98 927.64 L507.52 959.44 A47 47 0 0 0 503.97 967.19Z" fill="#fdbd9c" stroke="#fff" stroke-width="0.6"/><path d="M437.72 973.13 A111 111 0 0 1 443.60 945.93 L503.97 967.19 A47 47 0 0 0 501.48 978.70Z" fill="#a89b86" stroke="#fff" stroke-width="0.6"/><path d="M617.8 895.3 L626.6 883.8 L641.8 883.8" fill="none" stroke="#fd8a5c" stroke-width="1.2"/></svg>
<svg class="box" style="left:652px;top:880px" width="101" height="10" shape-rendering="crispEdges"><rect x="0" y="0" width="10" height="8" fill="#b0b0b0"/><rect x="10" y="0" width="10" height="8" fill="#8a8a8a"/><rect x="20" y="0" width="10" height="8" fill="#8f8f8f"/><rect x="30" y="0" width="10" height="8" fill="#ececec"/><rect x="40" y="0" width="10" height="8" fill="#9d9d9d"/><rect x="50" y="0" width="10" height="8" fill="#909090"/><rect x="60" y="0" width="10" height="8" fill="#969696"/><rect x="70" y="0" width="10" height="8" fill="#f7f7f7"/><rect x="80" y="0" width="10" height="8" fill="#c6c6c6"/><rect x="90" y="0" width="11" height="8" fill="#efefef"/></svg>
<div class="box" style="left:647px;top:888px;width:3px;height:1.5px;background:#111;border-radius:1px"></div>
<div class="box" style="left:679px;top:888px;width:3px;height:1.5px;background:#111;border-radius:1px"></div>
<div class="box" style="left:703px;top:888px;width:1.2px;height:3px;background:#111"></div>
<div class="box" style="left:1482px;top:811px;width:25px;height:14px;border-radius:4px;background:#20a7c9"></div>
<div class="a lg" style="left:1513px;top:812px;letter-spacing:0.4px">Нет дел &lt; 30 дней</div>
<div class="box" style="left:1631px;top:811px;width:25px;height:14px;border-radius:4px;background:#5cc08a"></div>
<div class="a lg" style="left:1661px;top:812px;letter-spacing:0.26px">Есть дела &lt; 30 дней</div>
<div class="box" style="left:1789px;top:809px;width:26px;height:19px;border:1px solid #555;border-radius:10px"></div><div class="a lg" style="left:1789px;width:26px;text-align:center;top:812px;color:#666">All</div>
<div class="box" style="left:1821px;top:809px;width:28px;height:19px;border:1px solid #555;border-radius:10px"></div><div class="a lg" style="left:1821px;width:28px;text-align:center;top:812px;color:#666">Inv</div>
<div class="box" style="left:912px;top:844px;width:922px;height:1px;background:#e0e6f1"></div>
<div class="a ax" style="left:850px;width:53px;text-align:right;top:837px">1,000</div>
<div class="box" style="left:912px;top:896px;width:922px;height:1px;background:#e0e6f1"></div>
<div class="a ax" style="left:850px;width:53px;text-align:right;top:889px">800</div>
<div class="box" style="left:912px;top:947px;width:922px;height:1px;background:#e0e6f1"></div>
<div class="a ax" style="left:850px;width:53px;text-align:right;top:940px">600</div>
<div class="box" style="left:957px;top:882px;width:14px;height:76px;background:#20a7c9"></div>
<div class="a lg" style="left:943px;width:41px;text-align:center;top:865px">851</div>
<div class="box" style="left:1679px;top:933px;width:13px;height:25px;background:#20a7c9"></div>
<div class="a lg" style="left:1665px;width:41px;text-align:center;top:915px">656</div>
<div class="box" style="left:0;top:958px;width:1904px;height:2px;background:#fff"></div>
<!-- /CHARTS -->
</body></html>
